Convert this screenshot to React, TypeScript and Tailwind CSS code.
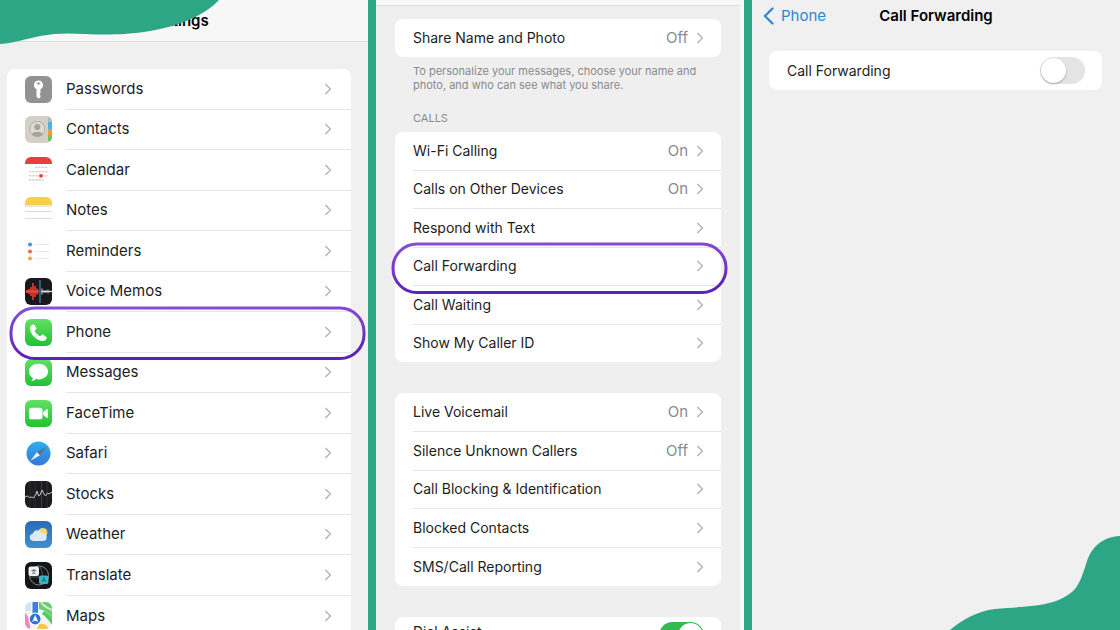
import { useId, useState } from 'react';
import type { ReactNode } from 'react';

function Chevron() {
  return (
    <svg viewBox="0 0 8 12" className="w-2 h-3 shrink-0" fill="none" stroke="#b4b4b8" strokeWidth="1.4">
      <path d="M1.4 1L6.4 6L1.4 11" />
    </svg>
  );
}

function Highlight({ className }: { className: string }) {
  const id = useId();
  return (
    <svg className={`absolute z-10 pointer-events-none overflow-visible ${className}`} fill="none">
      <defs>
        <linearGradient id={id} x1="0" y1="0" x2="0.15" y2="1">
          <stop offset="0" stopColor="#8650d4" />
          <stop offset="0.5" stopColor="#7a38c8" />
          <stop offset="1" stopColor="#5a22b8" />
        </linearGradient>
      </defs>
      <rect width="100%" height="100%" rx="24" stroke={`url(#${id})`} strokeWidth="3" />
    </svg>
  );
}

function AppIcon({ children }: { children: ReactNode }) {
  const id = useId();
  return (
    <svg viewBox="0 0 27 27" className="w-[27px] h-[27px] shrink-0" fill="none">
      <defs>
        <clipPath id={id}>
          <rect width="27" height="27" rx="6" />
        </clipPath>
        <linearGradient id="green" x1="0" y1="0" x2="0" y2="1">
          <stop stopColor="#62e066" />
          <stop offset="1" stopColor="#1fc232" />
        </linearGradient>
        <linearGradient id="sky" x1="0" y1="0" x2="0" y2="1">
          <stop stopColor="#2b6cb4" />
          <stop offset="1" stopColor="#3f8fd2" />
        </linearGradient>
        <linearGradient id="compass" x1="0" y1="0" x2="0" y2="1">
          <stop stopColor="#2fb0f0" />
          <stop offset="1" stopColor="#3576d8" />
        </linearGradient>
      </defs>
      <g clipPath={`url(#${id})`}>{children}</g>
    </svg>
  );
}

const apps: { name: string; icon: ReactNode }[] = [
  {
    name: 'Passwords',
    icon: (
      <>
        <rect width="27" height="27" fill="#929294" />
        <path d="M13.5 4.5a4.6 4.6 0 0 0-2 8.7v7.3l2 2.3l2-1.8v-1.6l-1-1.1l1-1.2v-3.9a4.6 4.6 0 0 0-2-8.7z" fill="#fff" />
        <circle cx="13.5" cy="7.5" r="1.2" fill="#929294" />
      </>
    ),
  },
  {
    name: 'Contacts',
    icon: (
      <>
        <rect width="27" height="27" fill="#d3d0c8" />
        <circle cx="12.3" cy="13" r="7.6" fill="#dedbd2" stroke="#b4b0a4" />
        <circle cx="12.3" cy="11" r="3" fill="#a7a396" />
        <path d="M6.7 18.3c1.5-3.3 9.7-3.3 11.2 0c-2.6 3.2-8.6 3.2-11.2 0z" fill="#a7a396" />
        <rect x="23" width="4" height="6" fill="#b9b7b0" />
        <rect x="23" y="6" width="4" height="7" fill="#46b4ec" />
        <rect x="23" y="13" width="4" height="6" fill="#f5973a" />
        <rect x="23" y="19" width="4" height="6" fill="#6cc65a" />
      </>
    ),
  },
  {
    name: 'Calendar',
    icon: (
      <>
        <rect width="27" height="27" fill="#fefefe" />
        <rect width="27" height="7" fill="#ea3f38" />
        <path d="M10 10.3h13" stroke="#c5c5c8" strokeDasharray="2.4 0.8" />
        <path d="M4 14.7h19M4 18.8h19" stroke="#f3b4b0" strokeDasharray="2.4 0.8" />
        <circle cx="16" cy="18.8" r="1.9" fill="#e0453f" />
        <path d="M4 23h14" stroke="#b6b6ba" strokeDasharray="2.4 0.8" />
      </>
    ),
  },
  {
    name: 'Notes',
    icon: (
      <>
        <rect width="27" height="27" fill="#fefefe" />
        <rect width="27" height="8.5" fill="#f8cf45" />
        <path d="M0 9.5h27" stroke="#d8d2bd" strokeWidth="0.8" strokeDasharray="1 1" />
        <path d="M0 14.5h27M0 21.5h27" stroke="#dcdcde" />
      </>
    ),
  },
  {
    name: 'Reminders',
    icon: (
      <>
        <rect width="27" height="27" fill="#fefefe" />
        <circle cx="5" cy="6.5" r="2" fill="#4a8fe0" />
        <circle cx="5" cy="13.5" r="2" fill="#e8684a" />
        <circle cx="5" cy="20.5" r="2" fill="#f5a64a" />
        <path d="M9 6.5h15M9 13.5h15M9 20.5h15" stroke="#e9e9eb" />
      </>
    ),
  },
  {
    name: 'Voice Memos',
    icon: (
      <>
        <rect width="27" height="27" fill="#17191c" />
        <path d="M2 12v3M4 11v5M6 9v9M8 5v17M10 8v11M12 10.5v6" stroke="#e5352e" strokeWidth="1.7" />
        <path d="M1 13.5h13" stroke="#f0483f" strokeWidth="2" />
        <path d="M15 2v23" stroke="#3c86b4" strokeWidth="1.3" />
        <path d="M17 10.5v6M19 12v3M21 12v3M23 11.5v4M25 12.5v2M16 13.5h11" stroke="#d9dcde" />
      </>
    ),
  },
  {
    name: 'Phone',
    icon: (
      <>
        <rect width="27" height="27" fill="url(#green)" />
        <path
          d="M8.2 5.2c-1.2.3-3.2 1.9-3.2 4.1c0 6 6.8 12.7 12.7 12.7c2.3 0 4-2 4.2-3.3c.1-.6-3.6-3.3-4.4-3.3c-.9 0-1.5 1.7-2.4 1.7c-1.4 0-5.3-3.9-5.3-5.3c0-.9 1.7-1.5 1.7-2.400c0-.8-2.600-4.300-3.300-4.200z"
          fill="#fff"
        />
      </>
    ),
  },
  {
    name: 'Messages',
    icon: (
      <>
        <rect width="27" height="27" fill="url(#green)" />
        <path d="M13.5 4.8c-5.5 0-9.6 3.4-9.6 7.8c0 2.7 1.6 5 4 6.4c-.1 1.2-.8 2.2-1.7 3c1.8 0 3.5-.7 4.7-1.9c.8.2 1.7.3 2.6.3c5.5 0 9.6-3.4 9.6-7.8s-4.1-7.8-9.6-7.8z" fill="#fff" />
      </>
    ),
  },
  {
    name: 'FaceTime',
    icon: (
      <>
        <rect width="27" height="27" fill="url(#green)" />
        <rect x="4" y="7.8" width="13.5" height="11.5" rx="2.6" fill="#fff" />
        <path d="M18.3 12l3.4-2.8c.6-.4 1.2-.1 1.2.5v7.6c0 .6-.6.9-1.2.5l-3.4-2.8z" fill="#fff" />
      </>
    ),
  },
  {
    name: 'Safari',
    icon: (
      <>
        <circle cx="13.5" cy="13.5" r="12" fill="url(#compass)" />
        <path d="M21.5 6.5l-9.6 5.7l3 3z" fill="#5d7186" />
        <path d="M5.5 20.8l6.4-8.6l3 3z" fill="#f4f8fb" />
      </>
    ),
  },
  {
    name: 'Stocks',
    icon: (
      <>
        <rect width="27" height="27" fill="#1c1c1e" />
        <path d="M5 0v27M10 0v27M22 0v27" stroke="#38383b" strokeWidth="0.7" />
        <path d="M16.5 0v27" stroke="#3c4c58" strokeWidth="0.8" />
        <path d="M0 16l2.5-1l2 1.5l2.500-.5l1.500 1l2.500-4l1-3l1.500 5l1.500-1l2-5l2 4l1.500 2l2-3l1.500 1l3-2" stroke="#c4c4c6" />
      </>
    ),
  },
  {
    name: 'Weather',
    icon: (
      <>
        <rect width="27" height="27" fill="url(#sky)" />
        <circle cx="17.8" cy="11.5" r="4.6" fill="#f8d568" />
        <path d="M8.2 20a3.700 3.700 0 0 1-.5-7.300a5 5 0 0 1 9.200-.6a4 4 0 0 1 1.500 7.900z" fill="#d9eafa" />
      </>
    ),
  },
  {
    name: 'Translate',
    icon: (
      <>
        <rect width="27" height="27" fill="#131517" />
        <circle cx="14" cy="13.5" r="9.5" stroke="#7c8b91" />
        <path d="M14 4c4.5 4 4.5 15 0 19M5 15h18" stroke="#4c5a60" />
        <rect x="3.5" y="4.5" width="10.5" height="9.5" rx="2" fill="#eef1f0" />
        <path d="M8.8 7v1.5M6.5 8.5h4.6M10 8.5c-.4 1.5-1.6 2.7-3.2 3.3M7.6 9.8c.7 1 1.7 1.6 2.9 2" stroke="#51565a" strokeWidth="0.8" />
        <rect x="14" y="13.5" width="9.5" height="8.5" rx="2" fill="#3cb4c8" />
        <path d="M17 20l1.8-4.5l1.8 4.5M17.6 18.5h2.4" stroke="#176072" strokeWidth="0.8" />
      </>
    ),
  },
  {
    name: 'Maps',
    icon: (
      <>
        <rect width="27" height="27" fill="#f4f4f0" />
        <path d="M14 0h13v18c-2-7-6-9-13-11z" fill="#67cf72" />
        <path d="M16 0c3 5 7 6 11 8" stroke="#d8efd6" strokeWidth="1.8" />
        <path d="M0 0h6v9H0z" fill="#cfe6f0" />
        <rect x="7.5" width="5.5" height="11" fill="#3f7fe4" />
        <path d="M0 11c4 3 5 9 5 16H0z" fill="#ee86c0" />
        <path d="M14 22c5-1 8 1 10 5H12z" fill="#f8c648" />
        <path d="M17 12c3 2 7 6 10 11V17c-2-4-4-6-8-8z" fill="#50c866" />
        <circle cx="10.2" cy="17" r="6" fill="#2a6fd8" stroke="#fff" strokeWidth="1.2" />
        <path d="M10.2 12.8l3 7.200l-3-1.600l-3 1.600z" fill="#fff" />
      </>
    ),
  },
];

interface RowProps {
  label: string;
  value?: string;
  highlighted?: boolean;
}

function SettingRow({ label, value, highlighted }: RowProps) {
  return (
    <li className="group relative flex flex-1 pl-[18px]">
      <a href="#" className="flex flex-1 items-center border-b border-[#e6e6e8] pr-[17px] group-last:border-b-0">
        <span className="flex-1 text-sm">{label}</span>
        {value && <span className="mr-2 text-[#8a8a8e]">{value}</span>}
        <Chevron />
      </a>
      {highlighted && <Highlight className="left-[-2px] top-[-4px] w-[calc(100%+7px)] h-[calc(100%+10px)]" />}
    </li>
  );
}

function SettingGroup({ rows, className }: { rows: RowProps[]; className: string }) {
  return (
    <ul className={`flex flex-col rounded-lg bg-white ${className}`}>
      {rows.map((row) => (
        <SettingRow key={row.label} {...row} />
      ))}
    </ul>
  );
}

interface ToggleRowProps {
  label: string;
  initial?: boolean;
  className?: string;
}

function ToggleRow({ label, initial = false, className = 'items-center' }: ToggleRowProps) {
  const [on, setOn] = useState(initial);
  return (
    <label className={`flex min-h-[39px] justify-between rounded-lg bg-white pl-[18px] pr-[17px] ${className}`}>
      <span className="text-sm">{label}</span>
      <span className="relative flex">
        <input
          type="checkbox"
          checked={on}
          onChange={() => setOn(!on)}
          className="h-[27px] w-[45px] appearance-none rounded-full bg-[#e4e4e4] checked:bg-[#34b850]"
        />
        <span
          className={`pointer-events-none absolute top-px size-[25px] rounded-full bg-white shadow-[0_1px_2px_rgba(0,0,0,0.3)] ${on ? 'right-px' : 'left-px'}`}
        />
      </span>
    </label>
  );
}

const callRows: RowProps[] = [
  { label: 'Wi-Fi Calling', value: 'On' },
  { label: 'Calls on Other Devices', value: 'On' },
  { label: 'Respond with Text' },
  { label: 'Call Forwarding', highlighted: true },
  { label: 'Call Waiting' },
  { label: 'Show My Caller ID' },
];

const screeningRows: RowProps[] = [
  { label: 'Live Voicemail', value: 'On' },
  { label: 'Silence Unknown Callers', value: 'Off' },
  { label: 'Call Blocking & Identification' },
  { label: 'Blocked Contacts' },
  { label: 'SMS/Call Reporting' },
];

function SettingsPanel() {
  return (
    <section className="overflow-hidden bg-[#f0f0f0]">
      <header className="flex h-[42px] items-center justify-center border-b border-[#dcdcdc] bg-[#f7f7f7] pr-[10px]">
        <h1 className="font-semibold text-black">Settings</h1>
      </header>
      <ul className="mt-[27px] ml-[7px] mr-[17px] flex min-h-[567px] flex-col rounded-lg bg-white">
        {apps.map((app) => (
          <li key={app.name} className="group relative flex flex-1 pl-[18px]">
            <a href="#" className="flex flex-1 items-center gap-[14px]">
              <AppIcon>{app.icon}</AppIcon>
              <span className="flex flex-1 items-center self-stretch border-b border-[#e6e6e8] pr-[19px] group-last:border-b-0">
                <span className="flex-1">{app.name}</span>
                <Chevron />
              </span>
            </a>
            {app.name === 'Phone' && (
              <Highlight className="left-1 top-[-4px] w-[calc(100%+9px)] h-[calc(100%+10px)]" />
            )}
          </li>
        ))}
      </ul>
    </section>
  );
}

function PhonePanel() {
  return (
    <section className="overflow-hidden border-r-4 border-[#f9f9f9] bg-[#efefef]">
      <div className="h-[6px] border-b border-[#dedede] bg-[#f8f8f8]" />
      <div className="mt-[13px] mx-[19px]">
        <SettingGroup rows={[{ label: 'Share Name and Photo', value: 'Off' }]} className="min-h-[38px]" />
        <p className="mt-[7px] px-[18px] text-[11px] leading-[14px] text-[#8a8a8e]">
          To personalize your messages, choose your name and photo, and who can see what you share.
        </p>
        <h2 className="mt-[19px] mb-[7px] px-[18px] text-[11px] leading-[14px] text-[#8a8a8e]">CALLS</h2>
        <SettingGroup rows={callRows} className="min-h-[230px]" />
        <SettingGroup rows={screeningRows} className="mt-[31px] min-h-[193px]" />
        <div className="mt-[31px]">
          <ToggleRow label="Dial Assist" initial className="items-start pt-[5px]" />
        </div>
      </div>
    </section>
  );
}

function ForwardingPanel() {
  return (
    <section className="overflow-hidden bg-[#f0f0f0]">
      <header className="grid h-8 grid-cols-[1fr_auto_1fr] items-center px-[11px]">
        <a href="#" className="flex items-center gap-[7px] text-[#2f86d0]">
          <svg viewBox="0 0 11 18" className="h-[18px] w-[11px]" fill="none" stroke="currentColor" strokeWidth="2.2" strokeLinecap="round">
            <path d="M9.5 1.5L2 9L9.5 16.5" />
          </svg>
          Phone
        </a>
        <h2 className="font-semibold text-black">Call Forwarding</h2>
      </header>
      <div className="mt-[19px] ml-[17px] mr-[18px]">
        <ToggleRow label="Call Forwarding" />
      </div>
    </section>
  );
}

export default function App() {
  return (
    <main className="relative grid h-screen grid-cols-3 gap-2 overflow-hidden bg-[#2da685] font-['Inter',sans-serif] text-[15px] leading-5 text-[#1c1c1e]">
      <SettingsPanel />
      <PhonePanel />
      <ForwardingPanel />

      {/* Corner waves */}
      <svg viewBox="0 0 220 46" className="absolute top-0 left-0 h-[46px] w-[220px]" fill="#2da685">
        <path d="M0 0H219C205 15 180 26 150 31C125 35 105 35 85 34C70 33 55 33 40 36C25 39 15 43 0 44Z" />
      </svg>
      <svg viewBox="0 0 170 100" className="absolute right-0 bottom-0 h-[100px] w-[170px]" fill="#2da685">
        <path d="M0 100C12 90 27 81 45 79C65 77 80 77 95 74C106 72 116 67 122 62C130 55 133 43 137 31C142 17 152 7 170 6V100Z" />
      </svg>
    </main>
  );
}
